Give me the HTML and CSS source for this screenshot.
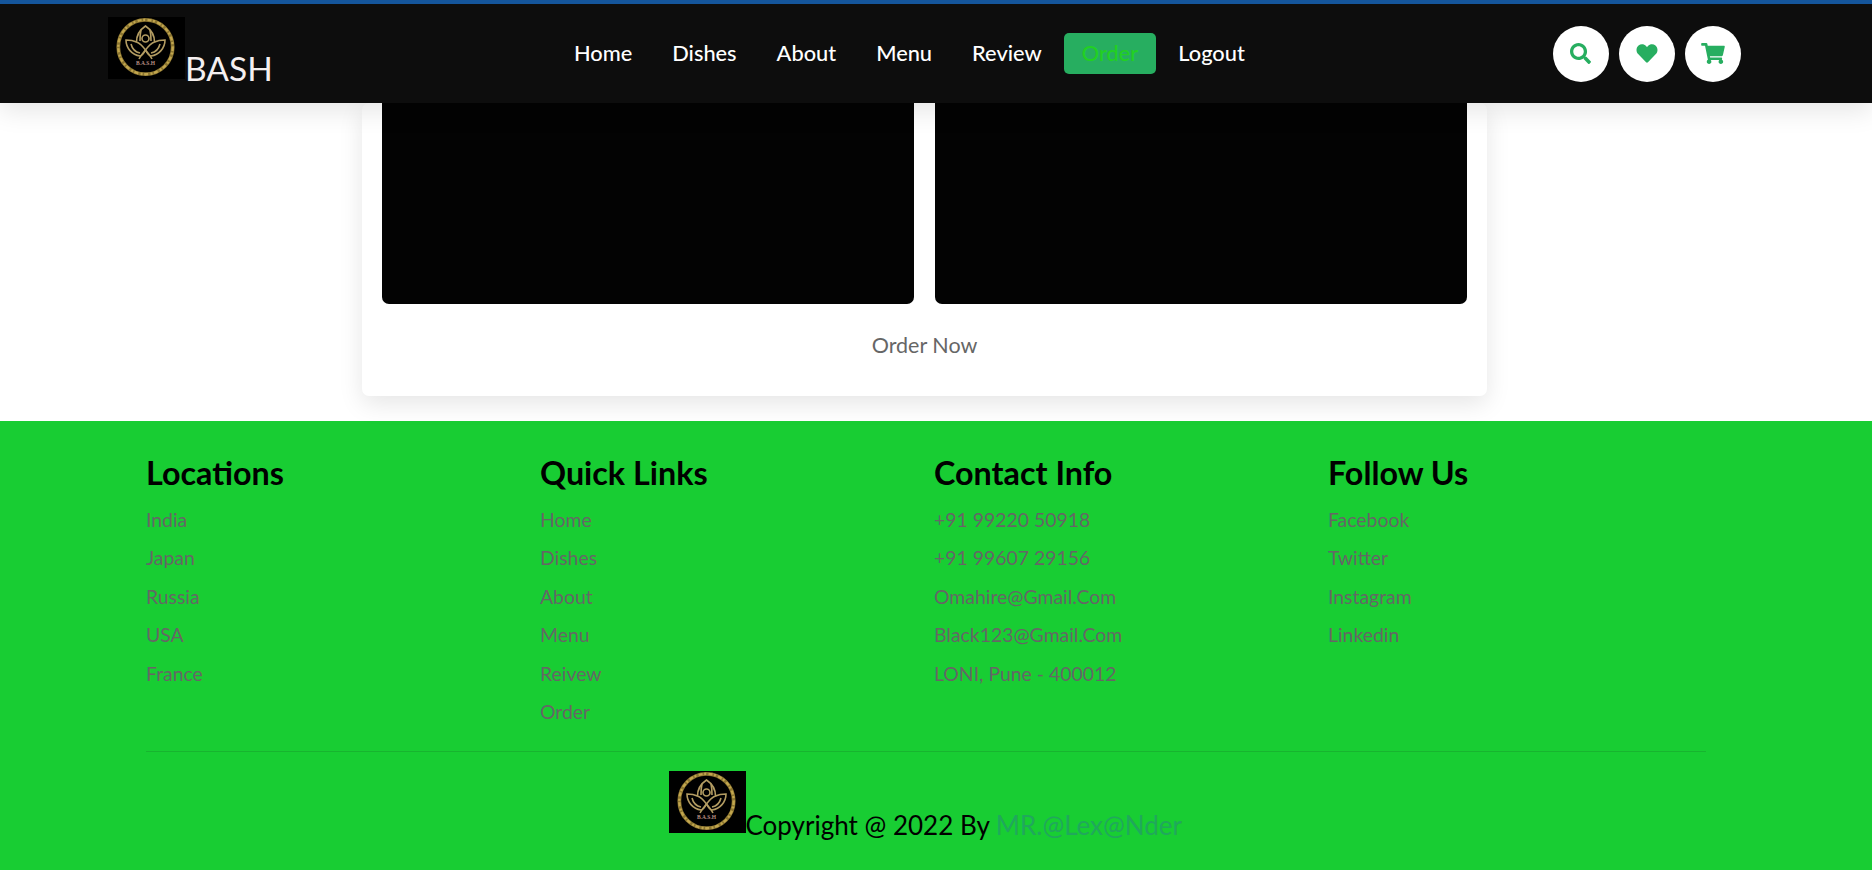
FILE: index.html
```html
<!DOCTYPE html>
<html lang="en">
<head>
  <meta charset="UTF-8">
  <meta name="viewport" content="width=device-width, initial-scale=1.0">
  <title>BASH</title>
  <link rel="stylesheet" href="styles.css">
</head>
<body>
  <svg class="sprite" width="0" height="0">
    <defs>
      <g id="bash-logo">
        <rect width="77" height="62" fill="#000"/>
        <circle cx="37.5" cy="30" r="27.2" fill="none" stroke="#8a7430" stroke-width="3.8"/>
        <circle cx="37.5" cy="30" r="27.2" fill="none" stroke="#c2a64e" stroke-width="2.4" stroke-dasharray="4 1.6 2 2.4"/>
        <g fill="none" stroke="#b39c62" stroke-width="1.6">
          <path d="M37.5 9c-6 4-9 9-9 16 3 1 6 4 9 8 3-4 6-7 9-8 0-7-3-12-9-16z"/>
          <path d="M33 13c-1 4-1 8-1 11M42 13c1 4 1 8 1 11"/>
          <path d="M28.500 25c-3-1.500-7-2-10.500-2 0 8 6 15 14 16 2 0 4-3 5.500-6"/>
          <path d="M46.500 25c3-1.500 7-2 10.500-2 0 8-6 15-14 16-2 0-4-3-5.500-6"/>
          <path d="M23 27c1 4 4 8 9 9M52 27c-1 4-4 8-9 9"/>
          <path d="M31 42c2-4 4-6 6.500-9 2.500 3 4.500 5 6.500 9"/>
          <circle cx="37.500" cy="21.500" r="3.500"/>
        </g>
      </g>
    </defs>
    <symbol id="icon-search" viewBox="0 0 512 512">
      <path d="M505 442.700L405.300 343c-4.500-4.500-10.600-7-17-7H372c27.600-35.300 44-79.700 44-128C416 93.100 322.900 0 208 0S0 93.100 0 208s93.100 208 208 208c48.300 0 92.700-16.400 128-44v16.300c0 6.400 2.500 12.500 7 17l99.700 99.700c9.400 9.400 24.600 9.400 33.900 0l28.300-28.300c9.400-9.400 9.400-24.600.1-34zM208 336c-70.700 0-128-57.200-128-128 0-70.700 57.200-128 128-128 70.700 0 128 57.200 128 128 0 70.700-57.200 128-128 128z"/>
    </symbol>
    <symbol id="icon-heart" viewBox="0 0 512 512">
      <path d="M462.300 62.600C407.500 15.900 326 24.300 275.700 76.200L256 96.500l-19.700-20.300C186.100 24.300 104.500 15.900 49.700 62.600c-62.800 53.600-66.100 149.800-9.900 207.900l193.500 199.800c12.500 12.900 32.800 12.900 45.300 0l193.500-199.800c56.300-58.100 53-154.300-9.800-207.900z"/>
    </symbol>
    <symbol id="icon-cart" viewBox="0 0 576 512">
      <path d="M528.120 301.319l47.273-208C578.806 78.301 567.391 64 551.990 64H159.208l-9.166-44.810C147.758 8.021 137.930 0 126.529 0H24C10.745 0 0 10.745 0 24v16c0 13.255 10.745 24 24 24h69.883l70.248 343.435C147.325 417.100 136 435.222 136 456c0 30.928 25.072 56 56 56s56-25.072 56-56c0-15.674-6.447-29.835-16.824-40h209.647C430.447 426.165 424 440.326 424 456c0 30.928 25.072 56 56 56s56-25.072 56-56c0-22.172-12.888-41.332-31.579-50.405l5.517-24.276c3.413-15.018-8.002-29.319-23.403-29.319H218.117l-6.545-32h293.145c11.206 0 20.920-7.754 23.403-18.681z"/>
    </symbol>
  </svg>

  <header class="header">
    <a href="#" class="brand"><svg class="brand-logo" viewBox="0 0 77 62"><use href="#bash-logo"/><text x="37.5" y="48" class="logo-text">B.A.S.H</text></svg>BASH</a>
    <nav class="navbar">
      <a href="#">Home</a>
      <a href="#">Dishes</a>
      <a href="#">About</a>
      <a href="#">Menu</a>
      <a href="#">Review</a>
      <a href="#" class="active">Order</a>
      <a href="#">Logout</a>
    </nav>
    <div class="icons">
      <a href="#" class="icon-btn"><svg class="icon-search"><use href="#icon-search"/></svg></a>
      <a href="#" class="icon-btn"><svg class="icon-heart"><use href="#icon-heart"/></svg></a>
      <a href="#" class="icon-btn"><svg class="icon-cart"><use href="#icon-cart"/></svg></a>
    </div>
  </header>

  <main class="order">
    <div class="order-card">
      <div class="order-images">
        <div class="order-image"></div>
        <div class="order-image"></div>
      </div>
      <a href="#" class="order-link">Order Now</a>
    </div>
  </main>

  <footer class="footer">
    <div class="footer-cols">
      <div class="footer-col">
        <h3>Locations</h3>
        <a href="#">India</a>
        <a href="#">Japan</a>
        <a href="#">Russia</a>
        <a href="#">USA</a>
        <a href="#">France</a>
      </div>
      <div class="footer-col">
        <h3>Quick Links</h3>
        <a href="#">Home</a>
        <a href="#">Dishes</a>
        <a href="#">About</a>
        <a href="#">Menu</a>
        <a href="#">Reivew</a>
        <a href="#">Order</a>
      </div>
      <div class="footer-col">
        <h3>Contact Info</h3>
        <a href="#">+91 99220 50918</a>
        <a href="#">+91 99607 29156</a>
        <a href="#">Omahire@Gmail.Com</a>
        <a href="#">Black123@Gmail.Com</a>
        <a href="#">LONI, Pune - 400012</a>
      </div>
      <div class="footer-col">
        <h3>Follow Us</h3>
        <a href="#">Facebook</a>
        <a href="#">Twitter</a>
        <a href="#">Instagram</a>
        <a href="#">Linkedin</a>
      </div>
    </div>
    <div class="credit"><svg class="credit-logo" viewBox="0 0 77 62"><use href="#bash-logo"/><text x="37.5" y="48" class="logo-text">B.A.S.H</text></svg>Copyright @ 2022 By <span>MR.@Lex@Nder</span></div>
  </footer>
</body>
</html>
```

FILE: styles.css
```css
/* General Reset */
* {
  margin: 0;
  padding: 0;
  box-sizing: border-box;
  text-decoration: none;
}

body {
  font-family: 'Lato', 'Open Sans', sans-serif;
  background-color: #fff;
  height: 870px;
  overflow: hidden;
}

.sprite {
  position: absolute;
}

.logo-text {
  font-family: 'Liberation Serif', serif;
  font-size: 5.5px;
  font-weight: 700;
  text-anchor: middle;
  fill: #b98f84;
}

/* Header */
.header {
  height: 103px;
  display: flex;
  justify-content: space-between;
  align-items: center;
  padding: 0 131px 0 108px;
  background-color: #0d0d0d;
  border-top: 4px solid #14559b;
  box-shadow: 0 8px 24px rgba(0, 0, 0, 0.1);
  position: relative;
  z-index: 2;
}

.brand {
  font-size: 33.5px;
  line-height: 1;
  color: #f5f0f0;
  align-self: flex-start;
  margin-top: 13px;
  white-space: nowrap;
}

.brand-logo {
  width: 77px;
  height: 62px;
  vertical-align: 2px;
}

.navbar {
  display: flex;
  gap: 4px;
  margin-right: 7px;
}

.navbar a {
  padding: 0 18px;
  height: 41px;
  line-height: 39px;
  font-size: 21.8px;
  font-weight: 500;
  color: #fff;
  border-radius: 5px;
}

.navbar a.active {
  background-color: #27ae60;
  color: #22d022;
}

.icons {
  display: flex;
  gap: 10px;
}

.icon-btn {
  width: 56px;
  height: 56px;
  border-radius: 50%;
  background-color: #fff;
  display: flex;
  justify-content: center;
  align-items: center;
}

.icon-btn svg {
  height: 21px;
  fill: #27ae60;
}

.icon-search { width: 21px; }
.icon-heart { width: 22px; }
.icon-cart { width: 24px; }

/* Order */
.order {
  height: 318px;
  position: relative;
}

.order-card {
  width: 1125px;
  height: 293px;
  margin-left: 362px;
  padding: 0 20px;
  background-color: #fff;
  border-radius: 7px;
  box-shadow: 0 8px 24px rgba(0, 0, 0, 0.1);
  display: flex;
  flex-direction: column;
}

.order-images {
  display: flex;
  justify-content: space-between;
  height: 201px;
}

.order-image {
  width: 532px;
  background-color: #030303;
  border-radius: 0 0 7px 7px;
}

.order-link {
  margin-top: 28px;
  text-align: center;
  font-size: 21.5px;
  color: #666;
}

/* Footer */
.footer {
  height: 449px;
  padding: 33px 166px 0 146px;
  background-color: #18cd33;
}

.footer-cols {
  display: grid;
  grid-template-columns: repeat(4, 1fr);
  gap: 16px;
  height: 298px;
  border-bottom: 1px solid #17b52f;
}

.footer-col h3 {
  font-size: 32.3px;
  line-height: 37px;
  font-weight: 700;
  color: #000;
  margin-bottom: 10px;
}

.footer-col a {
  display: block;
  height: 38.4px;
  line-height: 38.4px;
  font-size: 19.4px;
  color: #666;
}

.credit {
  margin-top: 19px;
  padding-left: 522.5px;
  font-size: 26px;
  line-height: 1;
  color: #000;
}

.credit-logo {
  width: 77px;
  height: 62px;
  vertical-align: 2px;
}

.credit span {
  color: #20a85c;
}
```
